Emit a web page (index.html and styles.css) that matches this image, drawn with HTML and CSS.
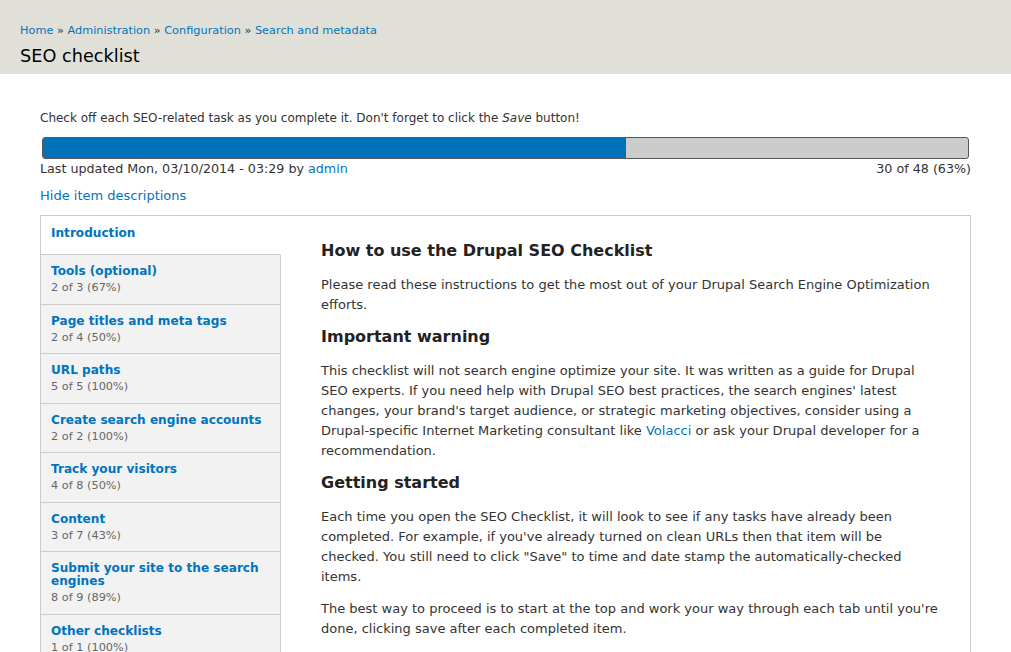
FILE: index.html
```html
<!DOCTYPE html>
<html lang="en">
<head>
  <meta charset="UTF-8" />
  <title>SEO checklist</title>
  <link rel="stylesheet" href="styles.css">
</head>
<body>
  <div class="branding">
    <div class="breadcrumb">
      <a href="#">Home</a> » <a href="#">Administration</a> » <a href="#">Configuration</a> » <a href="#">Search and metadata</a>
    </div>
    <h1 class="page-title">SEO checklist</h1>
  </div>

  <div class="page">
    <p class="help">Check off each SEO-related task as you complete it. Don't forget to click the <em>Save</em> button!</p>

    <div class="progress">
      <div class="bar"><div class="filled" style="width: 63%"></div></div>
      <div class="progress-info">
        <span>Last updated Mon, 03/10/2014 - 03:29 by <a href="#">admin</a></span>
        <span>30 of 48 (63%)</span>
      </div>
    </div>

    <a href="#" class="toggle">Hide item descriptions</a>

    <div class="vertical-tabs">
      <ul class="tab-list">
        <li class="tab selected"><a href="#"><strong>Introduction</strong></a></li>
        <li class="tab"><a href="#"><strong>Tools (optional)</strong></a><span class="summary">2 of 3 (67%)</span></li>
        <li class="tab"><a href="#"><strong>Page titles and meta tags</strong></a><span class="summary">2 of 4 (50%)</span></li>
        <li class="tab"><a href="#"><strong>URL paths</strong></a><span class="summary">5 of 5 (100%)</span></li>
        <li class="tab"><a href="#"><strong>Create search engine accounts</strong></a><span class="summary">2 of 2 (100%)</span></li>
        <li class="tab"><a href="#"><strong>Track your visitors</strong></a><span class="summary">4 of 8 (50%)</span></li>
        <li class="tab"><a href="#"><strong>Content</strong></a><span class="summary">3 of 7 (43%)</span></li>
        <li class="tab"><a href="#"><strong>Submit your site to the search engines</strong></a><span class="summary">8 of 9 (89%)</span></li>
        <li class="tab"><a href="#"><strong>Other checklists</strong></a><span class="summary">1 of 1 (100%)</span></li>
      </ul>

      <div class="pane">
        <h3>How to use the Drupal SEO Checklist</h3>
        <p>Please read these instructions to get the most out of your Drupal Search Engine Optimization efforts.</p>
        <h3>Important warning</h3>
        <p>This checklist will not search engine optimize your site. It was written as a guide for Drupal SEO experts. If you need help with Drupal SEO best practices, the search engines' latest changes, your brand's target audience, or strategic marketing objectives, consider using a Drupal-specific Internet Marketing consultant like <a href="#">Volacci</a> or ask your Drupal developer for a recommendation.</p>
        <h3>Getting started</h3>
        <p>Each time you open the SEO Checklist, it will look to see if any tasks have already been completed. For example, if you've already turned on clean URLs then that item will be checked. You still need to click "Save" to time and date stamp the automatically-checked items.</p>
        <p>The best way to proceed is to start at the top and work your way through each tab until you're done, clicking save after each completed item.</p>
      </div>
    </div>
  </div>
</body>
</html>
```

FILE: styles.css
```css
body {
  margin: 0;
  font-family: "DejaVu Sans", Verdana, sans-serif;
  font-size: 13px;
  line-height: 20px;
  color: #333;
  background: #fff;
}
a {
  color: #0074bd;
  text-decoration: none;
}
.branding {
  background: #e0e0d8;
  padding: 22px 20px 8px;
  height: 44px;
}
.breadcrumb {
  font-size: 11.3px;
  line-height: 18px;
}
.page-title {
  margin: 4px 0 0;
  font-size: 17.7px;
  font-weight: normal;
  line-height: 24px;
  color: #000;
}
.page {
  padding: 0 40px;
}
.help {
  margin: 34px 0 9px;
  font-size: 12px;
  line-height: 20px;
}
.bar {
  margin: 0 2px;
  height: 20px;
  border: 1px solid #555;
  border-radius: 3px;
  background: #ccc;
  overflow: hidden;
}
.filled {
  height: 100%;
  background: #0072b9;
}
.progress-info {
  display: flex;
  justify-content: space-between;
  font-size: 12.7px;
}
.toggle {
  display: block;
  margin: 7px 0 9px;
}
.vertical-tabs {
  display: flex;
  align-items: flex-start;
  border: 1px solid #ccc;
  min-height: 500px;
}
.tab-list {
  list-style: none;
  margin: 0;
  padding: 0;
  width: 240px;
  flex-shrink: 0;
}
.tab {
  background: #f2f2f2;
  border-bottom: 1px solid #ccc;
  border-right: 1px solid #ccc;
  padding: 10px 10px 8px;
}
.tab strong {
  display: block;
  font-size: 12.1px;
  line-height: 13px;
}
.tab .summary {
  display: block;
  font-size: 11.3px;
  line-height: 15.5px;
  color: #666;
  margin-top: 2px;
}
.tab.selected {
  background: #fff;
  border-right-color: #fff;
  padding: 11px 10px 14px;
}
.pane {
  flex: 1;
  padding: 15px 29px 0 40px;
}
.pane h3 {
  margin: 10px 0 14px;
  font-size: 16px;
  line-height: 20px;
  color: #222;
}
.pane p {
  margin: 0 0 12px;
}
```
